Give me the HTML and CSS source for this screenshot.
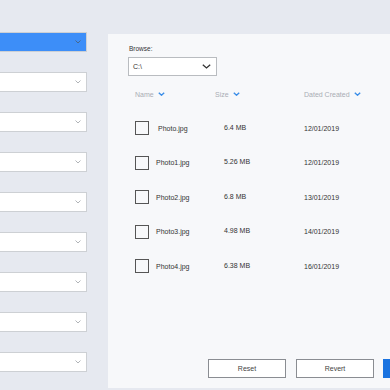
FILE: index.html
```html
<!DOCTYPE html>
<html>
<head>
<meta charset="utf-8">
<link rel="stylesheet" href="styles.css">
</head>
<body>
<div class="layout">
  <div class="sidebar">
    <div class="sel active"><svg class="chev" viewBox="0 0 6 4"><path d="M0.5 0.5 L3 3 L5.5 0.5"/></svg></div>
    <div class="sel"><svg class="chev" viewBox="0 0 6 4"><path d="M0.5 0.5 L3 3 L5.5 0.5"/></svg></div>
    <div class="sel"><svg class="chev" viewBox="0 0 6 4"><path d="M0.5 0.5 L3 3 L5.5 0.5"/></svg></div>
    <div class="sel"><svg class="chev" viewBox="0 0 6 4"><path d="M0.5 0.5 L3 3 L5.5 0.5"/></svg></div>
    <div class="sel"><svg class="chev" viewBox="0 0 6 4"><path d="M0.5 0.5 L3 3 L5.5 0.5"/></svg></div>
    <div class="sel"><svg class="chev" viewBox="0 0 6 4"><path d="M0.5 0.5 L3 3 L5.5 0.5"/></svg></div>
    <div class="sel"><svg class="chev" viewBox="0 0 6 4"><path d="M0.5 0.5 L3 3 L5.5 0.5"/></svg></div>
    <div class="sel"><svg class="chev" viewBox="0 0 6 4"><path d="M0.5 0.5 L3 3 L5.5 0.5"/></svg></div>
    <div class="sel"><svg class="chev" viewBox="0 0 6 4"><path d="M0.5 0.5 L3 3 L5.5 0.5"/></svg></div>
  </div>
  <div class="panel">
    <div class="label">Browse:</div>
    <div class="browse"><span>C:\</span><svg class="bchev" viewBox="0 0 9 5"><path d="M0.8 0.8 L4.5 4 L8.2 0.8"/></svg></div>
    <div class="head">
      <div class="hcol c-name">Name <svg class="hchev" viewBox="0 0 7 4"><path d="M0.8 0.8 L3.5 3.2 L6.2 0.8"/></svg></div>
      <div class="hcol c-size">Size <svg class="hchev" viewBox="0 0 7 4"><path d="M0.8 0.8 L3.5 3.2 L6.2 0.8"/></svg></div>
      <div class="hcol">Dated Created <svg class="hchev" viewBox="0 0 7 4"><path d="M0.8 0.8 L3.5 3.2 L6.2 0.8"/></svg></div>
    </div>
    <div class="rows">
      <div class="row"><span class="box"></span><span class="fname first">Photo.jpg</span><span class="fsize">6.4 MB</span><span class="fdate">12/01/2019</span></div>
      <div class="row"><span class="box"></span><span class="fname">Photo1.jpg</span><span class="fsize">5.26 MB</span><span class="fdate">12/01/2019</span></div>
      <div class="row"><span class="box"></span><span class="fname">Photo2.jpg</span><span class="fsize">6.8 MB</span><span class="fdate">13/01/2019</span></div>
      <div class="row"><span class="box"></span><span class="fname">Photo3.jpg</span><span class="fsize">4.98 MB</span><span class="fdate">14/01/2019</span></div>
      <div class="row"><span class="box"></span><span class="fname">Photo4.jpg</span><span class="fsize">6.38 MB</span><span class="fdate">16/01/2019</span></div>
    </div>
    <div class="actions">
      <button class="btn">Reset</button>
      <button class="btn">Revert</button>
      <button class="btn primary" aria-label="Apply"></button>
    </div>
  </div>
</div>
</body>
</html>
```
FILE: styles.css
```css
html, body {
  margin: 0;
  padding: 0;
}
body {
  background: #e6e9f0;
  font-family: "Liberation Sans", Arial, sans-serif;
  width: 390px;
  height: 390px;
  overflow: hidden;
}
.layout {
  display: flex;
  height: 390px;
}
.sidebar {
  width: 87px;
  flex: none;
  display: flex;
  flex-direction: column;
  gap: 20px;
  padding-top: 32px;
}
.sel {
  height: 20px;
  box-sizing: border-box;
  background: #fff;
  border: 1.5px solid #cdd0d4;
  border-left: none;
  display: flex;
  align-items: center;
  justify-content: flex-end;
  padding-right: 5px;
}
.sel.active {
  background: #3d8ef8;
}
.chev {
  width: 6px;
  height: 4px;
  fill: none;
  stroke: #a8abb0;
  stroke-width: 0.9;
}
.sel.active .chev {
  stroke: #4a6480;
}
.panel {
  margin-left: 21px;
  margin-top: 34px;
  height: 354px;
  flex: 1;
  min-width: 0;
  background: #f7f8fa;
  overflow: hidden;
  display: flex;
  flex-direction: column;
  padding: 10px 0 10px 20px;
  box-sizing: border-box;
}
.label {
  font-size: 6.5px;
  line-height: 10px;
  color: #333;
  margin-left: 1px;
}
.browse {
  margin-top: 3px;
  width: 89px;
  height: 19px;
  box-sizing: border-box;
  border: 1px solid #b9bcc0;
  background: #fff;
  display: flex;
  align-items: center;
  justify-content: space-between;
  padding: 0 5px 0 4px;
  font-size: 7px;
  color: #333;
}
.bchev {
  width: 9px;
  height: 5px;
  fill: none;
  stroke: #333;
  stroke-width: 1.3;
}
.head {
  display: flex;
  margin-top: 12px;
  height: 12px;
  align-items: center;
  padding-left: 7px;
  font-size: 7px;
  color: #a9adb4;
}
.hcol {
  display: flex;
  align-items: center;
  gap: 4px;
}
.c-name { width: 80px; }
.c-size { width: 89px; }
.hchev {
  width: 7px;
  height: 4px;
  fill: none;
  stroke: #3b8ee8;
  stroke-width: 1.4;
}
.rows {
  margin-top: 11px;
  display: flex;
  flex-direction: column;
}
.row {
  height: 34.5px;
  display: flex;
  align-items: center;
  padding-left: 7px;
  font-size: 7px;
  color: #333;
}
.box {
  width: 14px;
  height: 14px;
  box-sizing: border-box;
  border: 1.5px solid #555;
  flex: none;
}
.fname {
  margin-left: 7px;
  width: 68px;
}
.fname.first {
  margin-left: 9px;
  width: 66px;
}
.fsize {
  width: 80px;
  position: relative;
  top: -1px;
}
.actions {
  margin-top: auto;
  display: flex;
  gap: 9px;
  padding-left: 80px;
}
.btn {
  flex: none;
  width: 78px;
  height: 19px;
  box-sizing: border-box;
  border: 1px solid #8a8d92;
  background: #fff;
  font-family: "Liberation Sans", Arial, sans-serif;
  font-size: 7px;
  color: #444;
  padding: 0;
}
.btn + .btn { margin-left: 1px; }
.btn.primary {
  background: #1a73e0;
  border-color: #1a73e0;
  color: #fff;
  margin-left: 0;
}
```
